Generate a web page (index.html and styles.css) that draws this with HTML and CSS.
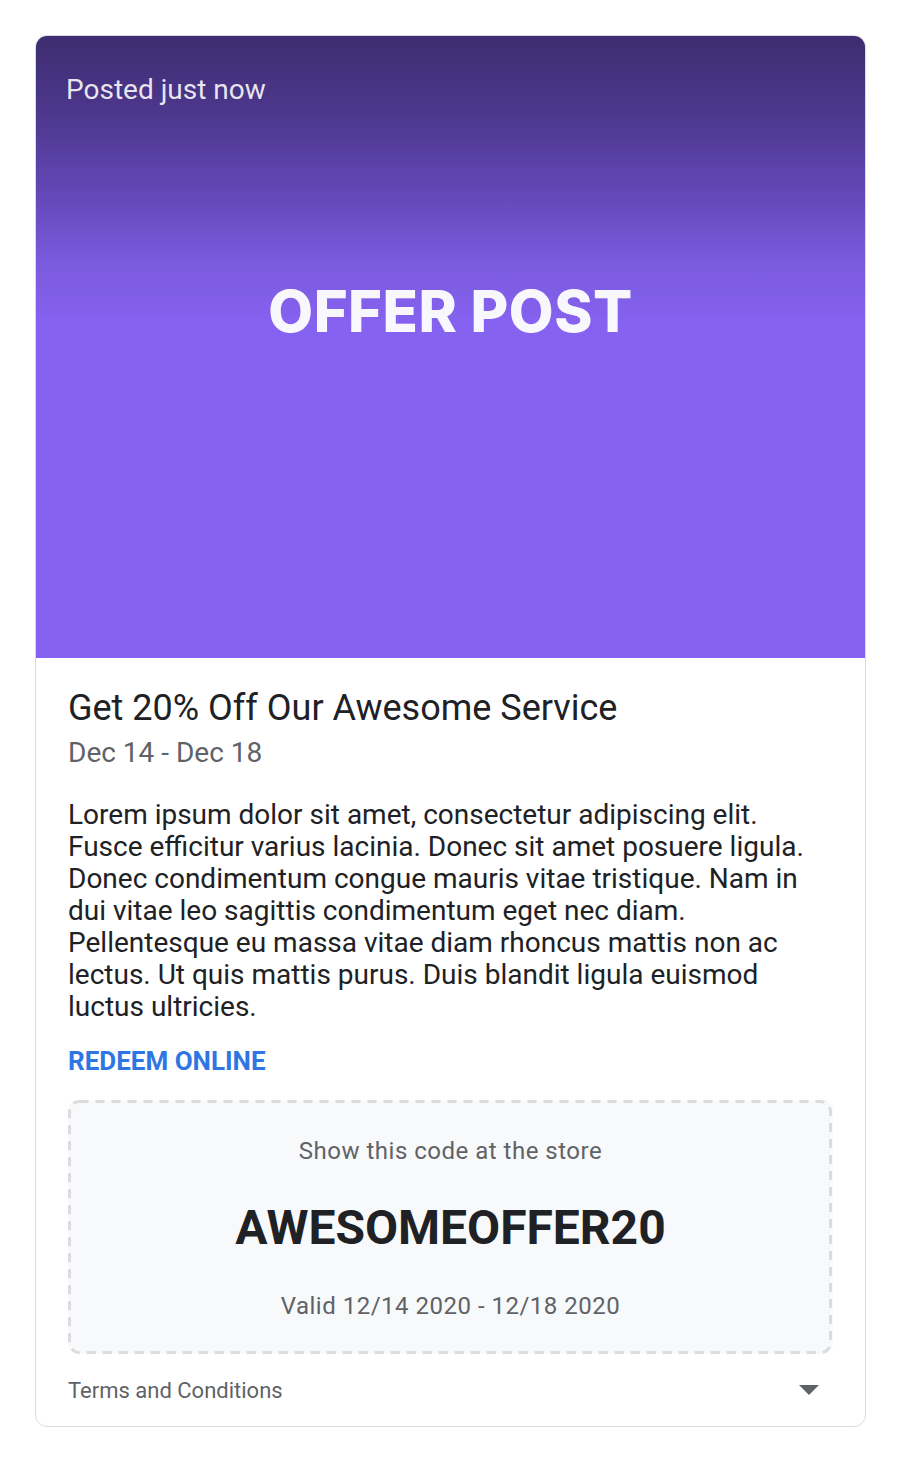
FILE: index.html
```html
<!DOCTYPE html>
<html>
<head>
<meta charset="utf-8">
<link rel="stylesheet" href="styles.css">
</head>
<body>
<div class="card">
  <div class="hero">
    <div class="posted">Posted just now</div>
    <div class="hero-title">OFFER POST</div>
  </div>
  <div class="content">
    <h1 class="title">Get 20% Off Our Awesome Service</h1>
    <div class="dates">Dec 14 - Dec 18</div>
    <p class="body">Lorem ipsum dolor sit amet, consectetur adipiscing elit. Fusce efficitur varius lacinia. Donec sit amet posuere ligula. Donec condimentum congue mauris vitae tristique. Nam in dui vitae leo sagittis condimentum eget nec diam. Pellentesque eu massa vitae diam rhoncus mattis non ac lectus. Ut quis mattis purus. Duis blandit ligula euismod luctus ultricies.</p>
    <a class="redeem" href="#">REDEEM ONLINE</a>
    <div class="code-box">
      <svg class="code-border" width="764" height="254" viewBox="0 0 764 254"><rect x="1.5" y="1.5" width="761" height="251" rx="10" ry="10" fill="none" stroke="#dadce0" stroke-width="3" stroke-dasharray="9 7"/></svg>
      <div class="code-label">Show this code at the store</div>
      <div class="code">AWESOMEOFFER20</div>
      <div class="valid">Valid 12/14 2020 - 12/18 2020</div>
    </div>
    <div class="terms">
      <span>Terms and Conditions</span>
      <svg class="caret" width="20" height="10" viewBox="0 0 20 10"><path d="M0 0 L20 0 L10 10 Z" fill="#5f6368"/></svg>
    </div>
  </div>
</div>
</body>
</html>
```

FILE: styles.css
```css
* { box-sizing: border-box; }
html, body { margin: 0; padding: 0; background: #fff; }
body { font-family: Roboto, "Noto Sans", Arial, sans-serif; padding: 35px 33px 30px 35px; }

.card {
  width: 831px;
  border: 1px solid #dadce0;
  border-radius: 12px;
  overflow: hidden;
  background: #fff;
}

.hero {
  position: relative;
  height: 622px;
  background: linear-gradient(180deg, #3e2d70 0px, #4b368a 70px, #6448b8 160px, #7a5add 225px, #8562ef 285px, #8562ef 100%);
  display: flex;
  flex-direction: column;
  align-items: center;
  padding-top: 240px;
}

.posted {
  position: absolute;
  left: 30px;
  top: 37px;
  font-size: 28px;
  line-height: 34px;
  color: rgba(255,255,255,0.88);
}

.hero-title {
  font-family: Inter, Roboto, sans-serif;
  font-weight: 800;
  font-size: 58px;
  line-height: 70px;
  color: rgba(255,255,255,0.95);
  letter-spacing: 0.5px;
}

.content {
  padding: 29px 32px 0 32px;
  display: flex;
  flex-direction: column;
  align-items: flex-start;
}

.title {
  margin: 0;
  font-weight: 400;
  font-size: 36px;
  line-height: 42px;
  color: #202124;
}

.dates {
  margin-top: 8px;
  font-size: 28px;
  line-height: 32px;
  color: #5f6368;
}

.body {
  margin: 30px 0 0 0;
  max-width: 752px;
  font-size: 28px;
  line-height: 32px;
  color: #202124;
}

.redeem {
  margin-top: 23px;
  font-size: 26px;
  line-height: 30px;
  font-weight: 700;
  color: #2f76e3;
  text-decoration: none;
}

.code-box {
  position: relative;
  align-self: stretch;
  margin-top: 24px;
  height: 254px;
  border-radius: 10px;
  background: #f8f9fa;
  display: flex;
  flex-direction: column;
  align-items: center;
  padding-top: 36px;
}

.code-border {
  position: absolute;
  left: 0;
  top: 0;
}

.code-label {
  font-size: 24px;
  line-height: 30px;
  color: #5f6368;
  letter-spacing: 0.5px;
}

.code {
  margin-top: 34px;
  font-size: 48px;
  line-height: 56px;
  font-weight: 700;
  color: #202124;
}

.valid {
  margin-top: 35px;
  font-size: 24px;
  line-height: 30px;
  color: #5f6368;
  letter-spacing: 0.5px;
}

.terms {
  align-self: stretch;
  display: flex;
  justify-content: space-between;
  align-items: center;
  height: 72px;
  padding-right: 14px;
  font-size: 22px;
  color: #5f6368;
}

.caret { display: block; }
```
